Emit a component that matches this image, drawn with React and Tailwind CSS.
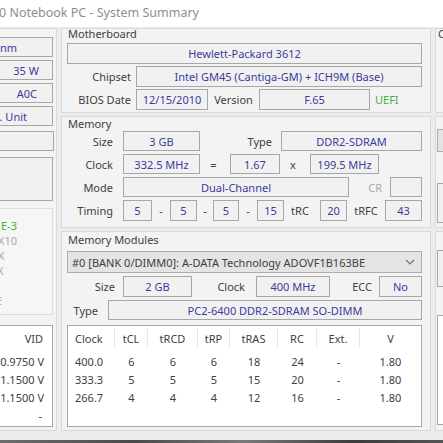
import React from "react";

const Box = ({ className = "", children }) => (
  <div className={"flex items-center justify-center border border-[#a7a7a7] bg-[#f1f1f1] text-[#3b3b9c] " + className}>
    {children}
  </div>
);

const Lbl = ({ className = "", children }) => (
  <div className={"flex items-center text-[#404040] " + className}>{children}</div>
);

const cols = "grid grid-cols-[47px_33px_50px_32px_48px_39px_43px_1fr]";

const rows = [
  ["400.0", "6", "6", "6", "18", "24", "-", "1.80"],
  ["333.3", "5", "5", "5", "15", "20", "-", "1.80"],
  ["266.7", "4", "4", "4", "12", "16", "-", "1.80"],
];

const heads = ["Clock", "tCL", "tRCD", "tRP", "tRAS", "RC", "Ext.", "V"];

export default function App() {
  return (
    <div className="w-[443px] h-[443px] overflow-hidden bg-[#ececec] flex flex-col font-['Noto_Sans',sans-serif] text-[11px] leading-none text-[#404040]">
      {/* title bar */}
      <div className="h-[27px] shrink-0 bg-white flex items-center text-[12.5px] text-[#8e8e8e] whitespace-nowrap">
        <span className="-ml-[1px]">0 Notebook PC - System Summary</span>
      </div>

      {/* body */}
      <div className="flex h-[413px] pt-[1px] shrink-0">
        {/* left column */}
        <div className="w-[101px] -ml-[44px] shrink-0 h-[403px] border border-[#d9d9d9] bg-[#f3f3f3] flex flex-col pr-[3px] whitespace-nowrap">
          <Box className="mt-[8px] h-[20px] !justify-end pr-[35px]">45 nm</Box>
          <Box className="mt-[3px] h-[20px] !justify-end pr-[13px]">35 W</Box>
          <Box className="mt-[3px] h-[20px] !justify-end pr-[15px]">A0C</Box>
          <Box className="mt-[3px] h-[20px] !justify-end pr-[25px]">Prod. Unit</Box>
          <Box className="mt-[5px] h-[20px] -mr-[1px]"></Box>
          <Box className="mt-[6px] h-[44px]"></Box>
          <div className="mt-[7px] h-[107px] border border-[#dedede] bg-[#f6f6f6] flex flex-col pl-[43px] pt-[9px] leading-[15px]">
            <span className="text-[#3fae45]">E-3</span>
            <span className="text-[#a9a9a9] -ml-[3px]">X10</span>
            <span className="text-[#a9a9a9] -ml-[3px]">X</span>
            <span className="text-[#a9a9a9] -ml-[4px]">X</span>
            <span className="text-[#a9a9a9] -ml-[5px] mt-[15px]">E</span>
          </div>
          <div className="mt-[10px] h-[102px] border border-[#a7a7a7] bg-white flex flex-col">
            <div className="h-[24px] flex items-center justify-end pr-[9px] text-[#404040]">VID</div>
            <div className="pt-[2px] flex flex-col text-[#404040]">
              <div className="h-[18px] flex items-center justify-end pr-[8px]">0.9750 V</div>
              <div className="h-[18px] flex items-center justify-end pr-[8px]">1.1500 V</div>
              <div className="h-[18px] flex items-center justify-end pr-[8px]">1.1500 V</div>
              <div className="h-[18px] flex items-center justify-end pr-[10px]">-</div>
            </div>
          </div>
        </div>

        {/* middle column */}
        <div className="ml-[4px] w-[370px] shrink-0 flex flex-col whitespace-nowrap">
          {/* Motherboard */}
          <div className="h-[85px] border border-[#d9d9d9] bg-[#f3f3f3] pl-[5px] pr-[8px] flex flex-col">
            <div className="h-[14px] leading-[10px] ml-[1px] text-[#404040]">Motherboard</div>
            <Box className="h-[21px]">Hewlett-Packard 3612</Box>
            <div className="mt-[2px] h-[21px] flex">
              <Lbl className="w-[64px] justify-end">Chipset</Lbl>
              <Box className="ml-[5px] flex-1">Intel GM45 (Cantiga-GM) + ICH9M (Base)</Box>
            </div>
            <div className="mt-[2px] h-[21px] flex">
              <Lbl className="w-[64px] justify-end">BIOS Date</Lbl>
              <Box className="ml-[5px] w-[72px]">12/15/2010</Box>
              <Lbl className="w-[51px] justify-center">Version</Lbl>
              <Box className="w-[111px]">F.65</Box>
              <Lbl className="ml-[5px] !text-[#3fae45]">UEFI</Lbl>
            </div>
          </div>

          {/* Memory */}
          <div className="mt-[3px] h-[112px] border border-[#d9d9d9] bg-[#f3f3f3] pl-[5px] pr-[8px] flex flex-col">
            <div className="h-[14px] leading-[14px] ml-[1px] text-[#404040]">Memory</div>
            <div className="h-[20px] flex">
              <Lbl className="w-[46px] justify-end">Size</Lbl>
              <Box className="ml-[10px] w-[77px]">3 GB</Box>
              <Lbl className="w-[81px] justify-end pr-[9px]">Type</Lbl>
              <Box className="flex-1">DDR2-SDRAM</Box>
            </div>
            <div className="mt-[3px] h-[20px] flex">
              <Lbl className="w-[46px] justify-end">Clock</Lbl>
              <Box className="ml-[10px] w-[77px]">332.5 MHz</Box>
              <Lbl className="w-[30px] justify-center pr-[3px]">=</Lbl>
              <Box className="w-[50px]">1.67</Box>
              <Lbl className="w-[30px] justify-center pr-[4px]">x</Lbl>
              <Box className="w-[69px]">199.5 MHz</Box>
            </div>
            <div className="mt-[3px] h-[20px] flex">
              <Lbl className="w-[46px] justify-end">Mode</Lbl>
              <Box className="ml-[10px] w-[226px]">Dual-Channel</Box>
              <Lbl className="w-[41px] justify-end pr-[8px] !text-[#a8a8a8]">CR</Lbl>
              <Box className="flex-1"></Box>
            </div>
            <div className="mt-[3px] h-[21px] flex">
              <Lbl className="w-[46px] justify-end">Timing</Lbl>
              <Box className="ml-[10px] w-[29px]">5</Box>
              <Lbl className="w-[18px] justify-center">-</Lbl>
              <Box className="w-[27px]">5</Box>
              <Lbl className="w-[16px] justify-center">-</Lbl>
              <Box className="w-[26px]">5</Box>
              <Lbl className="w-[18px] justify-center">-</Lbl>
              <Box className="w-[27px]">15</Box>
              <Lbl className="w-[36px] justify-center pr-[4px]">tRC</Lbl>
              <Box className="w-[27px]">20</Box>
              <Lbl className="w-[38px] justify-center">tRFC</Lbl>
              <Box className="flex-1">43</Box>
            </div>
          </div>

          {/* Memory Modules */}
          <div className="mt-[3px] h-[200px] border border-[#d9d9d9] bg-[#f3f3f3] pl-[5px] pr-[8px] flex flex-col">
            <div className="h-[19px] leading-[16px] ml-[1px] text-[#404040]">Memory Modules</div>
            <div className="h-[22px] border border-[#adadad] bg-[#e4e4e4] flex items-center justify-between pl-[4px] pr-[6px] text-[#404040]">
              <span>#0 [BANK 0/DIMM0]: A-DATA Technology ADOVF1B163BE</span>
              <svg width="10" height="6" viewBox="0 0 10 6" fill="none">
                <path d="M1 1 L5 5 L9 1" stroke="#707070" strokeWidth="1.1" />
              </svg>
            </div>
            <div className="mt-[3px] h-[21px] flex">
              <Lbl className="w-[48px] justify-end">Size</Lbl>
              <Box className="ml-[8px] w-[69px]">2 GB</Box>
              <Lbl className="w-[64px] justify-end pr-[11px]">Clock</Lbl>
              <Box className="w-[74px]">400 MHz</Box>
              <Lbl className="w-[49px] justify-end pr-[7px]">ECC</Lbl>
              <Box className="flex-1">No</Box>
            </div>
            <div className="mt-[3px] h-[20px] flex">
              <Lbl className="w-[41px] justify-end pr-[10px]">Type</Lbl>
              <Box className="flex-1 pl-[20px]">PC2-6400 DDR2-SDRAM SO-DIMM</Box>
            </div>
            <div className="mt-[5px] h-[102px] border border-[#a7a7a7] bg-white flex flex-col">
              <div className={cols + " h-[24px]"}>
                {heads.map((h, i) => (
                  <div
                    key={h}
                    className={
                      "mt-[2px] h-[20px] flex items-center border-r border-[#e8e8e8] " +
                      (i === 0 ? "justify-start pl-[7px]" : "justify-center") +
                      (i === 7 ? " border-r-0" : "")
                    }
                  >
                    {h}
                  </div>
                ))}
              </div>
              <div className="pt-[2px] flex flex-col">
                {rows.map((r, ri) => (
                  <div key={ri} className={cols + " h-[18px]"}>
                    {r.map((c, i) => (
                      <div
                        key={i}
                        className={"flex items-center " + (i === 0 ? "justify-start pl-[7px]" : "justify-center")}
                      >
                        {c}
                      </div>
                    ))}
                  </div>
                ))}
              </div>
            </div>
          </div>
        </div>

        {/* right column */}
        <div className="ml-[4px] w-[40px] shrink-0 flex flex-col">
          <div className="h-[85px] border border-[#d9d9d9] bg-[#f3f3f3] pl-[2px]">
            <div className="h-[14px] leading-[10px] text-[#404040]">C</div>
          </div>
          <div className="mt-[3px] h-[112px] border border-[#d9d9d9] bg-[#f3f3f3] pl-[1px] flex flex-col">
            <div className="mt-[12px] h-[23px] border border-[#adadad] bg-[#e4e4e4]"></div>
            <div className="mt-[31px] h-[40px] border border-[#a7a7a7] bg-[#f1f1f1]"></div>
          </div>
          <div className="mt-[3px] h-[200px] border border-[#d9d9d9] bg-[#f3f3f3] pl-[1px] flex flex-col">
            <div className="mt-[18px] h-[37px] border border-[#a7a7a7] bg-[#f1f1f1]"></div>
            <div className="mt-[28px] h-[110px] border border-[#a7a7a7] bg-white"></div>
          </div>
        </div>
      </div>

      {/* bottom dark strip */}
      <div className="h-[3px] shrink-0 bg-[linear-gradient(90deg,#6d6d6d,#4a4a4a_30%,#7a7a7a_55%,#3c3c3c_80%,#555555)]"></div>
    </div>
  );
}
